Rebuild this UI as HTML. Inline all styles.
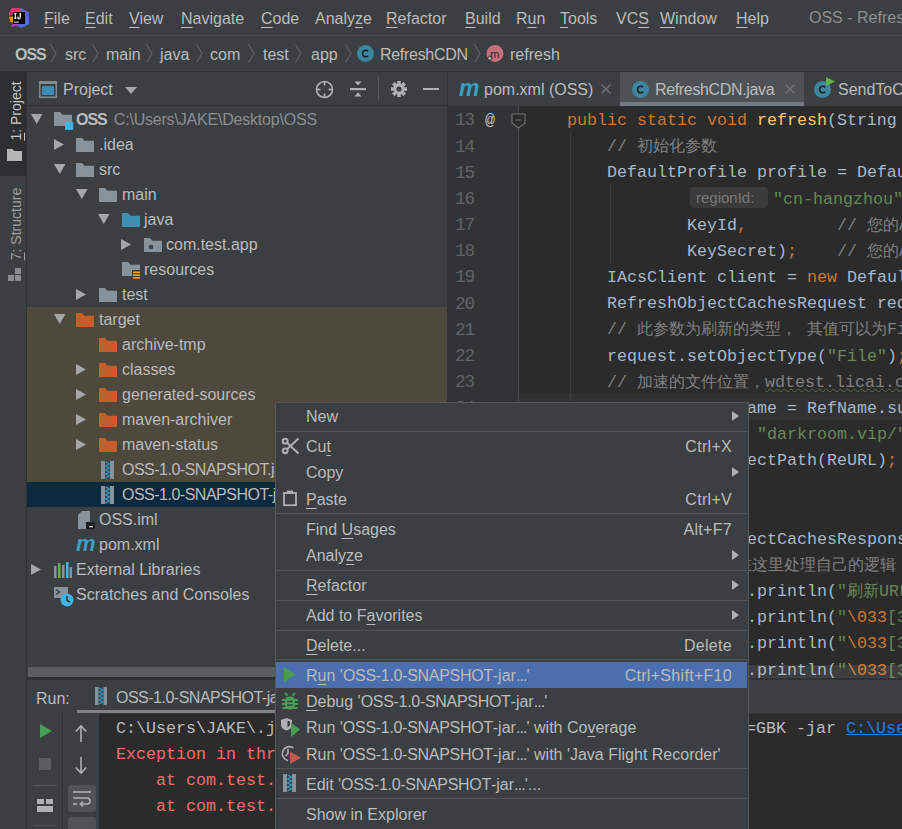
<!DOCTYPE html>
<html><head><meta charset="utf-8"><style>
*{margin:0;padding:0;box-sizing:border-box}
html,body{width:902px;height:829px;overflow:hidden;background:#3c3f41}
body{position:relative;font-family:"Liberation Sans",sans-serif;font-size:16px;color:#bbbbbb}
.a{position:absolute}
.t{position:absolute;white-space:pre;line-height:20px}
.c{position:absolute;white-space:pre;line-height:20px;font-family:"Liberation Mono",monospace;font-size:16.667px;color:#a9b7c6}
.u{text-decoration:underline;text-decoration-thickness:1px;text-underline-offset:3px}
svg{position:absolute;overflow:visible}
.z{font-size:16px;display:inline-block;width:16px;vertical-align:top}
.e{letter-spacing:-0.9px}.n{letter-spacing:-0.5px}.p{letter-spacing:-0.3px}.w{letter-spacing:0.25px}
.k{color:#cc7832}.f{color:#ffc66d}.s{color:#6a8759}.g{color:#808080}
</style></head><body>
<div class="a" style="left:0px;top:0px;width:902px;height:35px;background:#3c3f41;"></div>
<div class="a" style="left:0px;top:35px;width:902px;height:1px;background:#4a4d4f;"></div>
<div class="a" style="left:0px;top:36px;width:902px;height:35px;background:#3c3f41;"></div>
<div class="a" style="left:0px;top:71px;width:902px;height:1px;background:#323232;"></div>
<div class="a" style="left:0px;top:72px;width:27px;height:757px;background:#3c3f41;"></div>
<div class="a" style="left:0px;top:72px;width:26px;height:104px;background:#2d2f30;"></div>
<div class="a" style="left:26px;top:72px;width:1px;height:757px;background:#323232;"></div>
<div class="a" style="left:27px;top:72px;width:420px;height:608px;background:#3c3f41;"></div>
<div class="a" style="left:27px;top:105px;width:420px;height:1px;background:#323232;"></div>
<div class="a" style="left:447px;top:72px;width:1px;height:608px;background:#323232;"></div>
<div class="a" style="left:448px;top:72px;width:454px;height:34px;background:#3c3f41;"></div>
<div class="a" style="left:448px;top:106px;width:454px;height:574px;background:#2b2b2b;"></div>
<div class="a" style="left:448px;top:106px;width:71px;height:574px;background:#313335;"></div>
<div class="a" style="left:27px;top:680px;width:875px;height:33px;background:#3c3f41;"></div>
<div class="a" style="left:27px;top:677px;width:875px;height:3px;background:#2f3133;"></div>
<div class="a" style="left:28px;top:667px;width:419px;height:10px;background:#5b5c5d;"></div>
<div class="a" style="left:27px;top:713px;width:875px;height:116px;background:#2b2b2b;"></div>
<div class="t" style="left:44px;top:9px;"><span class="u">F</span>ile</div>
<div class="t" style="left:85px;top:9px;"><span class="u">E</span>dit</div>
<div class="t" style="left:129px;top:9px;"><span class="u">V</span>iew</div>
<div class="t" style="left:181px;top:9px;"><span class="u">N</span>avigate</div>
<div class="t" style="left:261px;top:9px;"><span class="u">C</span>ode</div>
<div class="t" style="left:315px;top:9px;">Analy<span class="u">z</span>e</div>
<div class="t" style="left:386px;top:9px;"><span class="u">R</span>efactor</div>
<div class="t" style="left:465px;top:9px;"><span class="u">B</span>uild</div>
<div class="t" style="left:516px;top:9px;">R<span class="u">u</span>n</div>
<div class="t" style="left:560px;top:9px;"><span class="u">T</span>ools</div>
<div class="t" style="left:616px;top:9px;">VC<span class="u">S</span></div>
<div class="t" style="left:660px;top:9px;"><span class="u">W</span>indow</div>
<div class="t" style="left:736px;top:9px;"><span class="u">H</span>elp</div>
<div class="t" style="left:809px;top:8px;color:#8e8e8e;">OSS - Refresh</div>
<svg style="left:0px;top:0px" width="32" height="32" viewBox="0 0 32 32">
<defs><linearGradient id="bl" x1="0" y1="0" x2="1" y2="1"><stop offset="0" stop-color="#3b7cf0"/><stop offset="0.5" stop-color="#6b57d8"/><stop offset="1" stop-color="#3b7cf0"/></linearGradient></defs>
<polygon points="21,8 29,12.5 29,24 21.5,28 16,25.5 17,12" fill="url(#bl)"/>
<polygon points="12,8 19.5,8.2 21,11 14,13 9,16 9.5,12" fill="#fe2d78"/>
<polygon points="9,17 13,16.5 13,22.5 10.5,22" fill="#fb8c1a"/>
<polygon points="11,27 13,23 19,23.5 16,25.5" fill="#b03ed8"/>
<rect x="13" y="12" width="12" height="12" fill="#000"/>
<g fill="#f2f2f2"><rect x="14" y="13" width="2.6" height="1.2"/><rect x="14.7" y="13" width="1.2" height="5.5"/><rect x="14" y="17.5" width="2.6" height="1.2"/>
<rect x="19.5" y="13" width="1.4" height="4.8"/><path d="M17.3,16.6 h1.3 v0.8 a0.9,0.9 0 0 0 1.8,0 h0.5 v0.4 a1.8,1.8 0 0 1 -3.6,0 Z"/>
<rect x="14.2" y="21.5" width="4.6" height="1.3" fill="#bdbdbd"/></g>
</svg>
<div class="t" style="left:15px;top:44.5px;font-weight:bold;letter-spacing:-1px">OSS</div>
<svg style="left:50px;top:44px" width="7" height="19"><polyline points="0.5,0.5 6,9.5 0.5,18.5" fill="none" stroke="#5e6060" stroke-width="1.2"/></svg>
<div class="t" style="left:65px;top:44.5px;">src</div>
<svg style="left:92px;top:44px" width="7" height="19"><polyline points="0.5,0.5 6,9.5 0.5,18.5" fill="none" stroke="#5e6060" stroke-width="1.2"/></svg>
<div class="t" style="left:106px;top:44.5px;">main</div>
<svg style="left:146px;top:44px" width="7" height="19"><polyline points="0.5,0.5 6,9.5 0.5,18.5" fill="none" stroke="#5e6060" stroke-width="1.2"/></svg>
<div class="t" style="left:160px;top:44.5px;">java</div>
<svg style="left:196px;top:44px" width="7" height="19"><polyline points="0.5,0.5 6,9.5 0.5,18.5" fill="none" stroke="#5e6060" stroke-width="1.2"/></svg>
<div class="t" style="left:210px;top:44.5px;">com</div>
<svg style="left:248px;top:44px" width="7" height="19"><polyline points="0.5,0.5 6,9.5 0.5,18.5" fill="none" stroke="#5e6060" stroke-width="1.2"/></svg>
<div class="t" style="left:263px;top:44.5px;">test</div>
<svg style="left:295px;top:44px" width="7" height="19"><polyline points="0.5,0.5 6,9.5 0.5,18.5" fill="none" stroke="#5e6060" stroke-width="1.2"/></svg>
<div class="t" style="left:311px;top:44.5px;">app</div>
<svg style="left:345px;top:44px" width="7" height="19"><polyline points="0.5,0.5 6,9.5 0.5,18.5" fill="none" stroke="#5e6060" stroke-width="1.2"/></svg>
<svg style="left:357px;top:45px" width="17" height="17" viewBox="0 0 17 17"><circle cx="8.5" cy="8.5" r="8.5" fill="#3e86a0"/><path d="M11.2,6.2 A3.3,3.3 0 1 0 11.2,10.8" fill="none" stroke="#1f1f1f" stroke-width="1.6"/></svg>
<div class="t" style="left:380px;top:44.5px;letter-spacing:-0.3px">RefreshCDN</div>
<svg style="left:474px;top:44px" width="7" height="19"><polyline points="0.5,0.5 6,9.5 0.5,18.5" fill="none" stroke="#5e6060" stroke-width="1.2"/></svg>
<svg style="left:486px;top:45px" width="18" height="18" viewBox="0 0 18 18"><circle cx="9" cy="8.5" r="8.5" fill="#c46f7d"/><text x="4.2" y="12.5" font-family="Liberation Sans" font-size="11" fill="#2b2b2b">m</text>
<rect x="1.5" y="11" width="4.5" height="4.5" transform="rotate(45 3.75 13.25)" fill="#3c3f41"/><rect x="2.5" y="12" width="2.5" height="2.5" transform="rotate(45 3.75 13.25)" fill="#b5b9bc"/></svg>
<div class="t" style="left:510px;top:44.5px;">refresh</div>
<div class="t" style="left:-15px;top:101px;width:62px;font-size:14px;transform:rotate(-90deg);transform-origin:31px 10px;text-align:center;color:#c8c8c8"><span class="u">1</span>: Project</div>
<svg style="left:7px;top:149px" width="15" height="12" viewBox="0 0 15 12"><path d="M0,0 H5.5 L7,2 H15 V12 H0 Z" fill="#b4b4b4"/></svg>
<div class="t" style="left:-22px;top:214px;width:76px;font-size:14px;transform:rotate(-90deg);transform-origin:38px 10px;text-align:center;color:#a0a0a0"><span class="u">7</span>: Structure</div>
<svg style="left:8px;top:268px" width="13" height="14" viewBox="0 0 13 14"><rect x="7" y="0" width="6" height="6" fill="#8a8c8e"/><rect x="0" y="7" width="6" height="6" fill="#8a8c8e"/><rect x="7" y="7" width="6" height="6" fill="#8a8c8e"/></svg>
<svg style="left:39px;top:81px" width="18" height="17" viewBox="0 0 18 17"><rect x="0.75" y="0.75" width="16.5" height="15.5" fill="none" stroke="#7f8b91" stroke-width="1.5"/><rect x="0" y="0" width="18" height="3" fill="#7f8b91"/><rect x="3" y="5" width="12" height="9" fill="#3d8bb0"/></svg>
<div class="t" style="left:63px;top:80px;">Project</div>
<svg style="left:125px;top:87px" width="12" height="7"><polygon points="0,0 12,0 6,7" fill="#a8a8a8"/></svg>
<svg style="left:315px;top:80px" width="19" height="19" viewBox="0 0 19 19"><circle cx="9.5" cy="9.5" r="8" fill="none" stroke="#aeb0b2" stroke-width="1.7"/>
<g stroke="#aeb0b2" stroke-width="1.7"><line x1="9.5" y1="1.5" x2="9.5" y2="5.5"/><line x1="9.5" y1="13.5" x2="9.5" y2="17.5"/>
<line x1="1.5" y1="9.5" x2="5.5" y2="9.5"/><line x1="13.5" y1="9.5" x2="17.5" y2="9.5"/></g></svg>
<svg style="left:350px;top:81px" width="16" height="16" viewBox="0 0 16 16"><rect x="0" y="7" width="16" height="2.2" fill="#aeb0b2"/>
<polygon points="4.5,0.5 11.5,0.5 8,4.5" fill="#aeb0b2"/><polygon points="4.5,15.5 11.5,15.5 8,11.2" fill="#aeb0b2"/></svg>
<div class="a" style="left:378px;top:77px;width:1px;height:24px;background:#55585a;"></div>
<svg style="left:391px;top:81px" width="16" height="16" viewBox="0 0 16 16"><g fill="#aeb0b2">
<circle cx="8" cy="8" r="5.6"/>
<rect x="6.2" y="0" width="3.6" height="16"/><rect x="0" y="6.2" width="16" height="3.6"/>
<rect x="6.2" y="0" width="3.6" height="16" transform="rotate(45 8 8)"/><rect x="6.2" y="0" width="3.6" height="16" transform="rotate(-45 8 8)"/></g>
<circle cx="8" cy="8" r="2.6" fill="#3c3f41"/></svg>
<div class="a" style="left:423px;top:87.5px;width:16px;height:2.5px;background:#aeb0b2;"></div>
<div class="a" style="left:27px;top:307px;width:420px;height:175px;background:#4d493d;"></div>
<div class="a" style="left:27px;top:482px;width:420px;height:25px;background:#0d293e;"></div>
<svg style="left:31px;top:114px" width="12" height="10"><polygon points="0,0 11.5,0 5.75,10" fill="#a4a6a8"/></svg>
<svg style="left:54px;top:112px" width="19" height="16" viewBox="0 0 19 16"><path d="M0,0 H6 L8.5,2.7 H18 V14 H0 Z" fill="#87929a"/><rect x="11" y="9.7" width="8.2" height="8.2" fill="#3fb4e4"/></svg>
<div class="t" style="left:76px;top:110px;"><b style="letter-spacing:-1px">OSS</b><span style="color:#8b8d8f;margin-left:7px;letter-spacing:-0.2px">C:\Users\JAKE\Desktop\OSS</span></div>
<svg style="left:54px;top:139px" width="10" height="11"><polygon points="0,0 10,5.5 0,11" fill="#a4a6a8"/></svg>
<svg style="left:76px;top:137.5px" width="19" height="16" viewBox="0 0 19 16"><path d="M0,0 H6 L8.5,2.7 H18 V14 H0 Z" fill="#87929a"/></svg>
<div class="t" style="left:99px;top:135px;">.idea</div>
<svg style="left:54px;top:164px" width="12" height="10"><polygon points="0,0 11.5,0 5.75,10" fill="#a4a6a8"/></svg>
<svg style="left:76px;top:162.5px" width="19" height="16" viewBox="0 0 19 16"><path d="M0,0 H6 L8.5,2.7 H18 V14 H0 Z" fill="#87929a"/></svg>
<div class="t" style="left:99px;top:160px;">src</div>
<svg style="left:76px;top:189px" width="12" height="10"><polygon points="0,0 11.5,0 5.75,10" fill="#a4a6a8"/></svg>
<svg style="left:99px;top:187.5px" width="19" height="16" viewBox="0 0 19 16"><path d="M0,0 H6 L8.5,2.7 H18 V14 H0 Z" fill="#87929a"/></svg>
<div class="t" style="left:122px;top:185px;">main</div>
<svg style="left:98px;top:214px" width="12" height="10"><polygon points="0,0 11.5,0 5.75,10" fill="#a4a6a8"/></svg>
<svg style="left:122px;top:212.5px" width="19" height="16" viewBox="0 0 19 16"><path d="M0,0 H6 L8.5,2.7 H18 V14 H0 Z" fill="#3f8fb5"/></svg>
<div class="t" style="left:144px;top:210px;">java</div>
<svg style="left:121px;top:239px" width="10" height="11"><polygon points="0,0 10,5.5 0,11" fill="#a4a6a8"/></svg>
<svg style="left:144px;top:237.5px" width="19" height="16" viewBox="0 0 19 16"><path d="M0,0 H6 L8.5,2.7 H18 V14 H0 Z" fill="#87929a"/><circle cx="7" cy="9" r="2.3" fill="#3c3f41"/></svg>
<div class="t" style="left:166px;top:235px;">com.test.app</div>
<svg style="left:122px;top:262px" width="19" height="16" viewBox="0 0 19 16"><path d="M0,0 H6 L8.5,2.7 H18 V14 H0 Z" fill="#87929a"/><rect x="10" y="8" width="9" height="9" fill="#3c3f41"/><g fill="#e8a33d"><rect x="11" y="9.5" width="7" height="1.6"/><rect x="11" y="12.3" width="7" height="1.6"/><rect x="11" y="15.1" width="7" height="1.6"/></g></svg>
<div class="t" style="left:144px;top:260px;">resources</div>
<svg style="left:76px;top:289px" width="10" height="11"><polygon points="0,0 10,5.5 0,11" fill="#a4a6a8"/></svg>
<svg style="left:99px;top:287.5px" width="19" height="16" viewBox="0 0 19 16"><path d="M0,0 H6 L8.5,2.7 H18 V14 H0 Z" fill="#87929a"/></svg>
<div class="t" style="left:122px;top:285px;">test</div>
<svg style="left:54px;top:314px" width="12" height="10"><polygon points="0,0 11.5,0 5.75,10" fill="#a4a6a8"/></svg>
<svg style="left:76px;top:312.5px" width="19" height="16" viewBox="0 0 19 16"><path d="M0,0 H6 L8.5,2.7 H18 V14 H0 Z" fill="#c55e2b"/></svg>
<div class="t" style="left:99px;top:310px;">target</div>
<svg style="left:99px;top:337.5px" width="19" height="16" viewBox="0 0 19 16"><path d="M0,0 H6 L8.5,2.7 H18 V14 H0 Z" fill="#c55e2b"/></svg>
<div class="t" style="left:122px;top:335px;">archive-tmp</div>
<svg style="left:76px;top:364px" width="10" height="11"><polygon points="0,0 10,5.5 0,11" fill="#a4a6a8"/></svg>
<svg style="left:99px;top:362.5px" width="19" height="16" viewBox="0 0 19 16"><path d="M0,0 H6 L8.5,2.7 H18 V14 H0 Z" fill="#c55e2b"/></svg>
<div class="t" style="left:122px;top:360px;">classes</div>
<svg style="left:76px;top:389px" width="10" height="11"><polygon points="0,0 10,5.5 0,11" fill="#a4a6a8"/></svg>
<svg style="left:99px;top:387.5px" width="19" height="16" viewBox="0 0 19 16"><path d="M0,0 H6 L8.5,2.7 H18 V14 H0 Z" fill="#c55e2b"/></svg>
<div class="t" style="left:122px;top:385px;">generated-sources</div>
<svg style="left:76px;top:414px" width="10" height="11"><polygon points="0,0 10,5.5 0,11" fill="#a4a6a8"/></svg>
<svg style="left:99px;top:412.5px" width="19" height="16" viewBox="0 0 19 16"><path d="M0,0 H6 L8.5,2.7 H18 V14 H0 Z" fill="#c55e2b"/></svg>
<div class="t" style="left:122px;top:410px;">maven-archiver</div>
<svg style="left:76px;top:439px" width="10" height="11"><polygon points="0,0 10,5.5 0,11" fill="#a4a6a8"/></svg>
<svg style="left:99px;top:437.5px" width="19" height="16" viewBox="0 0 19 16"><path d="M0,0 H6 L8.5,2.7 H18 V14 H0 Z" fill="#c55e2b"/></svg>
<div class="t" style="left:122px;top:435px;">maven-status</div>
<svg style="left:101px;top:461px" width="13" height="18" viewBox="0 0 13 18"><rect x="0" y="0" width="13" height="18" fill="#87929a"/><rect x="4" y="0" width="5" height="18" fill="#34444d"/><path d="M4.5,1 L8.5,3 L4.5,5 L8.5,7 L4.5,9 L8.5,11 L4.5,13 L8.5,15 L4.5,17" fill="none" stroke="#3a9cc4" stroke-width="1.1"/></svg>
<div class="t" style="left:122px;top:460px;"><span class=n>OSS-1.0-SNAPSHOT.jar</span></div>
<svg style="left:101px;top:486px" width="13" height="18" viewBox="0 0 13 18"><rect x="0" y="0" width="13" height="18" fill="#87929a"/><rect x="4" y="0" width="5" height="18" fill="#34444d"/><path d="M4.5,1 L8.5,3 L4.5,5 L8.5,7 L4.5,9 L8.5,11 L4.5,13 L8.5,15 L4.5,17" fill="none" stroke="#3a9cc4" stroke-width="1.1"/></svg>
<div class="t" style="left:122px;top:485px;"><span class=n>OSS-1.0-SNAPSHOT-jar-with-dependencies.jar</span></div>
<svg style="left:78px;top:511px" width="17" height="18" viewBox="0 0 17 18"><path d="M0,4 L4,0 H12 V18 H0 Z" fill="#87929a"/><rect x="8" y="11" width="9" height="7" fill="#1e1e1e"/><rect x="11" y="15" width="4" height="1.3" fill="#cfcfcf"/></svg>
<div class="t" style="left:99px;top:510px;">OSS.iml</div>
<div class="t" style="left:76px;top:533px;font-size:22px;line-height:22px;font-weight:bold;font-style:italic;color:#3e9ec1;letter-spacing:-1px">m</div>
<div class="t" style="left:99px;top:535px;">pom.xml</div>
<svg style="left:31px;top:564px" width="10" height="11"><polygon points="0,0 10,5.5 0,11" fill="#a4a6a8"/></svg>
<svg style="left:54px;top:562px" width="18" height="16" viewBox="0 0 18 16"><rect x="0" y="4" width="2.5" height="12" fill="#87929a"/><rect x="4" y="1" width="2.5" height="15" fill="#62b543"/><rect x="8" y="3" width="2.5" height="13" fill="#87929a"/><rect x="12" y="0" width="2.5" height="16" fill="#3fb4e4"/><rect x="15.5" y="5" width="2.5" height="11" fill="#87929a"/></svg>
<div class="t" style="left:76px;top:560px;">External Libraries</div>
<svg style="left:54px;top:587px" width="20" height="20" viewBox="0 0 20 20"><rect x="0" y="0" width="14" height="11" fill="#87929a"/><polyline points="2,2.5 5.5,5 2,7.5" fill="none" stroke="#3c3f41" stroke-width="1.3"/><circle cx="13" cy="13" r="6.5" fill="#3fb4e4"/><polyline points="13,9 13,13.5 16,15" fill="none" stroke="#2b2b2b" stroke-width="1.4"/></svg>
<div class="t" style="left:76px;top:585px;">Scratches and Consoles</div>
<div class="a" style="left:620px;top:72px;width:184px;height:34px;background:#4e5254;"></div>
<div class="a" style="left:620px;top:102px;width:184px;height:4px;background:#747a80;"></div>
<div class="t" style="left:459px;top:77px;font-size:23px;line-height:23px;font-weight:bold;font-style:italic;color:#3e9ec1;letter-spacing:-1px">m</div>
<div class="t" style="left:484px;top:80px;">pom.xml (OSS)</div>
<svg style="left:601px;top:84px" width="10" height="10"><line x1="0.5" y1="0.5" x2="9.5" y2="9.5" stroke="#6e7173" stroke-width="1.4"/><line x1="9.5" y1="0.5" x2="0.5" y2="9.5" stroke="#6e7173" stroke-width="1.4"/></svg>
<svg style="left:632px;top:81px" width="17" height="17" viewBox="0 0 17 17"><circle cx="8.5" cy="8.5" r="8.5" fill="#3e86a0"/><path d="M11.2,6.2 A3.3,3.3 0 1 0 11.2,10.8" fill="none" stroke="#1f1f1f" stroke-width="1.6"/></svg>
<div class="t" style="left:655px;top:80px;letter-spacing:-0.35px">RefreshCDN.java</div>
<svg style="left:785px;top:84px" width="10" height="10"><line x1="0.5" y1="0.5" x2="9.5" y2="9.5" stroke="#6e7173" stroke-width="1.4"/><line x1="9.5" y1="0.5" x2="0.5" y2="9.5" stroke="#6e7173" stroke-width="1.4"/></svg>
<svg style="left:814px;top:81px" width="17" height="17" viewBox="0 0 17 17"><circle cx="8.5" cy="8.5" r="8.5" fill="#3e86a0"/><path d="M11.2,6.2 A3.3,3.3 0 1 0 11.2,10.8" fill="none" stroke="#1f1f1f" stroke-width="1.6"/></svg>
<svg style="left:826px;top:77px" width="10" height="10"><polygon points="0,0 9,4.5 0,9" fill="#62b543"/></svg>
<div class="t" style="left:838px;top:80px;">SendToCDN.java</div>
<div class="a" style="left:518px;top:106px;width:1px;height:574px;background:#4d4d4d;"></div>
<div class="c" style="left:455px;top:110.3px;color:#606366;font-size:17.7px;letter-spacing:-1px">13</div>
<div class="c" style="left:455px;top:136.5px;color:#606366;font-size:17.7px;letter-spacing:-1px">14</div>
<div class="c" style="left:455px;top:162.6px;color:#606366;font-size:17.7px;letter-spacing:-1px">15</div>
<div class="c" style="left:455px;top:188.8px;color:#606366;font-size:17.7px;letter-spacing:-1px">16</div>
<div class="c" style="left:455px;top:215.0px;color:#606366;font-size:17.7px;letter-spacing:-1px">17</div>
<div class="c" style="left:455px;top:241.2px;color:#606366;font-size:17.7px;letter-spacing:-1px">18</div>
<div class="c" style="left:455px;top:267.3px;color:#606366;font-size:17.7px;letter-spacing:-1px">19</div>
<div class="c" style="left:455px;top:293.5px;color:#606366;font-size:17.7px;letter-spacing:-1px">20</div>
<div class="c" style="left:455px;top:319.7px;color:#606366;font-size:17.7px;letter-spacing:-1px">21</div>
<div class="c" style="left:455px;top:345.8px;color:#606366;font-size:17.7px;letter-spacing:-1px">22</div>
<div class="c" style="left:455px;top:372.0px;color:#606366;font-size:17.7px;letter-spacing:-1px">23</div>
<div class="c" style="left:455px;top:398.2px;color:#606366;font-size:17.7px;letter-spacing:-1px">24</div>
<div class="c" style="left:485px;top:111.0px;color:#bfbfbf">@</div>
<svg style="left:511px;top:113px" width="15" height="16" viewBox="0 0 15 16"><path d="M1,1 H14 V10 L7.5,15 L1,10 Z" fill="#2b2b2b" stroke="#6c6c6c" stroke-width="1.2"/><line x1="4.5" y1="7" x2="10.5" y2="7" stroke="#6c6c6c" stroke-width="1.2"/></svg>
<div class="a" style="left:519px;top:394px;width:383px;height:26px;background:#323232;"></div>
<div class="a" style="left:570px;top:132px;width:1px;height:548px;background:#3b3b3b;"></div>
<div class="a" style="left:610px;top:184px;width:1px;height:79px;background:#3b3b3b;"></div>
<div class="c" style="left:567px;top:111.0px"><span class="k">public static void </span><span class="f">refresh</span>(String</div>
<div class="c" style="left:607px;top:137.2px"><span class="g">// <span class="z">初</span><span class="z">始</span><span class="z">化</span><span class="z">参</span><span class="z">数</span></span></div>
<div class="c" style="left:607px;top:163.3px">DefaultProfile profile = Defau</div>
<div class="a" style="left:690px;top:187px;width:78px;height:21px;background:#3b3b3b;border-radius:4px"></div>
<div class="t" style="left:696px;top:187.5px;color:#787878;font-size:15px">regionId:</div>
<div class="c" style="left:773px;top:189.5px"><span class="s">"cn-hangzhou"</span></div>
<div class="c" style="left:687px;top:215.7px">KeyId<span class="k">,</span></div>
<div class="c" style="left:837px;top:215.7px"><span class="g">// <span class="z">您</span><span class="z">的</span>A</span></div>
<div class="c" style="left:687px;top:241.9px">KeySecret)<span class="k">;</span></div>
<div class="c" style="left:837px;top:241.9px"><span class="g">// <span class="z">您</span><span class="z">的</span>A</span></div>
<div class="c" style="left:607px;top:268.0px">IAcsClient client = <span class="k">new </span>DefaulT</div>
<div class="c" style="left:607px;top:294.2px">RefreshObjectCachesRequest req</div>
<div class="c" style="left:607px;top:320.4px"><span class="g">// <span class="z">此</span><span class="z">参</span><span class="z">数</span><span class="z">为</span><span class="z">刷</span><span class="z">新</span><span class="z">的</span><span class="z">类</span><span class="z">型</span><span class="z">，</span> <span class="z">其</span><span class="z">值</span><span class="z">可</span><span class="z">以</span><span class="z">为</span>Fi</span></div>
<div class="c" style="left:607px;top:346.5px">request.setObjectType(<span class="s">"File"</span>)<span class="k">;</span></div>
<div class="c" style="left:607px;top:372.7px"><span class="g">// <span class="z">加</span><span class="z">速</span><span class="z">的</span><span class="z">文</span><span class="z">件</span><span class="z">位</span><span class="z">置</span><span class="z">，</span></span></div>
<div class="c" style="left:765px;top:372.7px"><span class="g" style="text-decoration:underline wavy #5c6e52;text-decoration-thickness:1px">wdtest.licai.c</span></div>
<div class="c" style="left:747px;top:398.9px">ame = RefName.su</div>
<div class="c" style="left:757px;top:425.0px"><span class="s">"darkroom.vip/"</span></div>
<div class="c" style="left:747px;top:451.2px">ectPath(ReURL)<span class="k">;</span></div>
<div class="c" style="left:747px;top:529.7px">ectCachesRespons</div>
<div class="c" style="left:736px;top:555.9px"><span class="g"><span class="z">在</span><span class="z">这</span><span class="z">里</span><span class="z">处</span><span class="z">理</span><span class="z">自</span><span class="z">己</span><span class="z">的</span><span class="z">逻</span><span class="z">辑</span></span></div>
<div class="c" style="left:747px;top:582.1px">.println(<span class="s">"<span class="z">刷</span><span class="z">新</span>URL</span></div>
<div class="c" style="left:747px;top:608.2px">.println(<span class="s">"</span><span class="k">\033</span><span class="s">[3</span></div>
<div class="c" style="left:747px;top:634.4px">.println(<span class="s">"</span><span class="k">\033</span><span class="s">[3</span></div>
<div class="c" style="left:747px;top:660.6px">.println(<span class="s">"</span><span class="k">\033</span><span class="s">[3</span></div>
<div class="a" style="left:748px;top:665px;width:154px;height:13px;background:rgba(255,255,255,0.09);"></div>
<div class="t" style="left:36px;top:688.5px;">Run:</div>
<svg style="left:95px;top:687px" width="12" height="18" viewBox="0 0 12 18"><rect x="0" y="0" width="12" height="18" fill="#87929a"/><rect x="3.5" y="0" width="5" height="18" fill="#34444d"/><path d="M4,1 L8,3 L4,5 L8,7 L4,9 L8,11 L4,13 L8,15 L4,17" fill="none" stroke="#3a9cc4" stroke-width="1.1"/></svg>
<div class="t" style="left:116px;top:688px;"><span class=n>OSS-1.0-SNAPSHOT-jar-with-dependencies</span></div>
<div class="a" style="left:77px;top:710px;width:363px;height:3px;background:#7f8387;"></div>
<div class="a" style="left:27px;top:713px;width:875px;height:1px;background:#323232;"></div>
<div class="a" style="left:27px;top:713px;width:35px;height:116px;background:#3c3f41;"></div>
<div class="a" style="left:62px;top:713px;width:37px;height:116px;background:#3c3f41;"></div>
<div class="a" style="left:62px;top:713px;width:1px;height:116px;background:#323232;"></div>
<svg style="left:40px;top:724px" width="12" height="14"><polygon points="0,0 12,7 0,14" fill="#499c54"/></svg>
<div class="a" style="left:39px;top:758px;width:12px;height:12px;background:#5a5d5f;"></div>
<div class="a" style="left:33px;top:785px;width:24px;height:1px;background:#55585a;"></div>
<svg style="left:37px;top:799px" width="16" height="13" viewBox="0 0 16 13"><rect x="0" y="0" width="7" height="5" fill="#aeb0b2"/><rect x="9" y="0" width="7" height="5" fill="#aeb0b2"/><rect x="0" y="7" width="16" height="6" fill="#aeb0b2"/></svg>
<div class="a" style="left:33px;top:825px;width:24px;height:1px;background:#55585a;"></div>
<svg style="left:75px;top:725px" width="12" height="17" viewBox="0 0 12 17"><line x1="6" y1="1" x2="6" y2="17" stroke="#aeb0b2" stroke-width="1.6"/><polyline points="0.8,6.5 6,1 11.2,6.5" fill="none" stroke="#aeb0b2" stroke-width="1.6"/></svg>
<svg style="left:75px;top:757px" width="12" height="17" viewBox="0 0 12 17"><line x1="6" y1="0" x2="6" y2="16" stroke="#aeb0b2" stroke-width="1.6"/><polyline points="0.8,10.5 6,16 11.2,10.5" fill="none" stroke="#aeb0b2" stroke-width="1.6"/></svg>
<div class="a" style="left:68px;top:785px;width:28px;height:27px;background:#4f5355;border-radius:3px"></div>
<svg style="left:72px;top:790px" width="20" height="17" viewBox="0 0 20 17"><g fill="none" stroke="#aeb0b2" stroke-width="1.6"><line x1="1" y1="2" x2="19" y2="2"/><path d="M1,8 H15 A3,3 0 0 1 15,14 H9"/><line x1="1" y1="14" x2="5" y2="14"/><polyline points="11,11.5 8.5,14 11,16.5"/></g></svg>
<div class="a" style="left:68px;top:817px;width:28px;height:14px;background:#4f5355;border-radius:3px"></div>
<div class="c" style="left:116px;top:718.5px"><span style="color:#bbbbbb">C:\Users\JAKE\.j</span></div>
<div class="c" style="left:746px;top:718.5px"><span style="color:#bbbbbb">=GBK -jar </span><span style="color:#287bde;text-decoration:underline">C:\Users</span></div>
<div class="c" style="left:116px;top:744.5px"><span style="color:#ff6b68">Exception in thr</span></div>
<div class="c" style="left:156px;top:770.5px"><span style="color:#ff6b68">at com.test.</span></div>
<div class="c" style="left:156px;top:796.5px"><span style="color:#ff6b68">at com.test.</span></div>
<div class="a" style="left:275px;top:402px;width:474px;height:427px;background:#3c3f41;border:1px solid #555759;border-bottom:none"></div>
<div class="a" style="left:276px;top:662px;width:471px;height:26px;background:#4b6eaf;"></div>
<div class="t" style="left:306px;top:407px;">New</div>
<svg style="left:732px;top:411px" width="7" height="10"><polygon points="0,0 7,5 0,10" fill="#b0b0b0"/></svg>
<div class="a" style="left:276px;top:431px;width:471px;height:1px;background:#515355;"></div>
<div class="t" style="left:306px;top:437px;">Cu<span class="u">t</span></div>
<div class="t" style="right:170px;top:437px;letter-spacing:0.3px;">Ctrl+X</div>
<div class="t" style="left:306px;top:463px;">Copy</div>
<svg style="left:732px;top:467px" width="7" height="10"><polygon points="0,0 7,5 0,10" fill="#b0b0b0"/></svg>
<div class="t" style="left:306px;top:489.5px;"><span class="u">P</span>aste</div>
<div class="t" style="right:170px;top:489.5px;letter-spacing:0.3px;">Ctrl+V</div>
<div class="a" style="left:276px;top:513px;width:471px;height:1px;background:#515355;"></div>
<div class="t" style="left:306px;top:520px;">Find <span class="u">U</span>sages</div>
<div class="t" style="right:170px;top:520px;letter-spacing:0.3px;">Alt+F7</div>
<div class="t" style="left:306px;top:546px;">Analy<span class="u">z</span>e</div>
<svg style="left:732px;top:550px" width="7" height="10"><polygon points="0,0 7,5 0,10" fill="#b0b0b0"/></svg>
<div class="a" style="left:276px;top:570px;width:471px;height:1px;background:#515355;"></div>
<div class="t" style="left:306px;top:576px;"><span class="u">R</span>efactor</div>
<svg style="left:732px;top:580px" width="7" height="10"><polygon points="0,0 7,5 0,10" fill="#b0b0b0"/></svg>
<div class="a" style="left:276px;top:600px;width:471px;height:1px;background:#515355;"></div>
<div class="t" style="left:306px;top:606px;">Add to F<span class="u">a</span>vorites</div>
<svg style="left:732px;top:610px" width="7" height="10"><polygon points="0,0 7,5 0,10" fill="#b0b0b0"/></svg>
<div class="a" style="left:276px;top:630px;width:471px;height:1px;background:#515355;"></div>
<div class="t" style="left:306px;top:636px;"><span class="u">D</span>elete...</div>
<div class="t" style="right:170px;top:636px;letter-spacing:0.3px;">Delete</div>
<div class="a" style="left:276px;top:659px;width:471px;height:1px;background:#515355;"></div>
<div class="t" style="left:306px;top:666px;">R<span class="u">u</span>n '<span class=p>OSS-1.0-SNAPSHOT</span>-jar<span class=e>...</span>'</div>
<div class="t" style="right:170px;top:666px;letter-spacing:0.3px;">Ctrl+Shift+F10</div>
<div class="t" style="left:306px;top:692px;"><span class="u">D</span>ebug '<span class=p>OSS-1.0-SNAPSHOT</span>-jar<span class=e>...</span>'</div>
<div class="t" style="left:306px;top:718px;">Run '<span class=p>OSS-1.0-SNAPSHOT</span>-jar<span class=e>...</span>' with Co<span class="u">v</span>erage</div>
<div class="t" style="left:306px;top:744.5px;">Run '<span class=p>OSS-1.0-SNAPSHOT</span>-jar<span class=e>...</span>' with 'Java Flight Recorder'</div>
<div class="a" style="left:276px;top:768px;width:471px;height:1px;background:#515355;"></div>
<div class="t" style="left:306px;top:775px;">Edit '<span class=p>OSS-1.0-SNAPSHOT</span>-jar<span class=e>...</span>'...</div>
<div class="a" style="left:276px;top:798px;width:471px;height:1px;background:#515355;"></div>
<div class="t" style="left:306px;top:805px;">Show in Explorer</div>
<svg style="left:282px;top:438px" width="17" height="16" viewBox="0 0 17 16"><g fill="none" stroke="#aeb0b2" stroke-width="2">
<circle cx="3.2" cy="3.2" r="2.4"/><circle cx="3.2" cy="12.8" r="2.4"/><line x1="5" y1="4.8" x2="16.5" y2="15.5"/><line x1="5" y1="11.2" x2="16.5" y2="0.5"/></g></svg>
<svg style="left:283px;top:490px" width="14" height="16" viewBox="0 0 14 16"><rect x="1" y="3" width="12" height="12.2" fill="none" stroke="#aeb0b2" stroke-width="1.8"/><rect x="4" y="0.5" width="6" height="3.5" fill="#aeb0b2"/></svg>
<svg style="left:284px;top:667px" width="12" height="15"><polygon points="0,0 12,7.5 0,15" fill="#499c54"/></svg>
<svg style="left:282px;top:692px" width="16" height="18" viewBox="0 0 16 18"><g fill="#499c54">
<rect x="3" y="4.5" width="10" height="13" rx="4.5"/>
<rect x="0" y="7" width="16" height="2"/><rect x="0" y="11" width="16" height="2"/><rect x="0.5" y="15" width="15" height="2"/>
<rect x="3.2" y="0.3" width="2" height="4" transform="rotate(-35 4.2 2.3)"/><rect x="10.8" y="0.3" width="2" height="4" transform="rotate(35 11.8 2.3)"/></g>
<rect x="5.3" y="8.8" width="5.4" height="1.5" fill="#3c3f41"/><rect x="5.3" y="12.3" width="5.4" height="1.5" fill="#3c3f41"/></svg>
<svg style="left:281px;top:718px" width="19" height="19" viewBox="0 0 19 19"><path d="M0,2 L5.5,0 L11,2 V7 C11,10 8.5,11.5 5.5,12.5 C2.5,11.5 0,10 0,7 Z" fill="#afb1b3"/>
<path d="M6.5,2.8 L9,3.6 V7 L6.5,9.8 Z" fill="#3c3f41"/><polygon points="10,4.8 19,11.5 10,19" fill="#499c54"/></svg>
<svg style="left:281px;top:745px" width="20" height="19" viewBox="0 0 20 19"><g fill="none" stroke="#aeb0b2" stroke-width="1.6"><path d="M12.5,3 A7,7 0 1 0 7,15.5"/><polyline points="7,4 7,8.5 4.5,11"/></g>
<polygon points="9,6.5 20,12.7 9,19" fill="#c75450"/></svg>
<svg style="left:283px;top:774px" width="13" height="18" viewBox="0 0 13 18"><rect x="0" y="0" width="13" height="18" fill="#87929a"/><rect x="4" y="0" width="5" height="18" fill="#34444d"/><path d="M4.5,1 L8.5,3 L4.5,5 L8.5,7 L4.5,9 L8.5,11 L4.5,13 L8.5,15 L4.5,17" fill="none" stroke="#3a9cc4" stroke-width="1.1"/></svg>
</body></html>
